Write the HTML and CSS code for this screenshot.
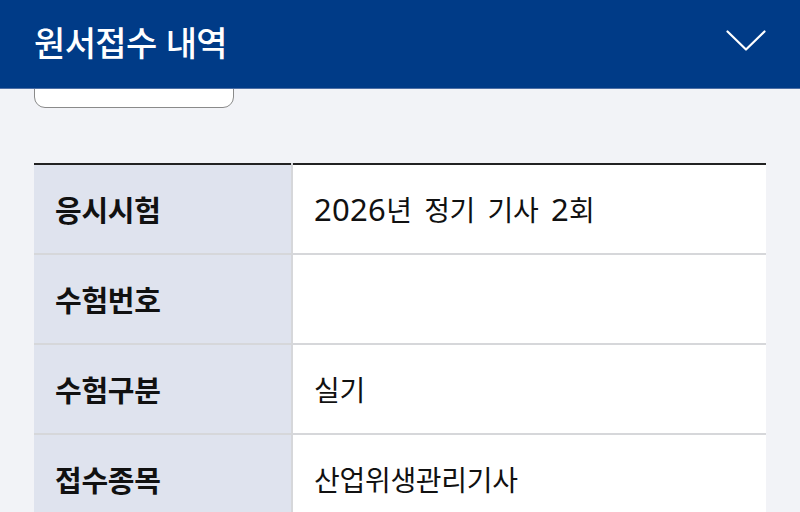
FILE: index.html
```html
<!DOCTYPE html>
<html lang="ko">
<head>
<meta charset="utf-8">
<link rel="stylesheet" href="styles.css">
</head>
<body>
<div class="page">
  <div class="content">
    <div class="btn-wrap"><div class="btn"></div></div>
    <table class="info">
      <tr><th>응시시험</th><td><span class="num">2026</span>년 정기 기사 <span class="num">2</span>회</td></tr>
      <tr><th>수험번호</th><td></td></tr>
      <tr><th>수험구분</th><td>실기</td></tr>
      <tr><th>접수종목</th><td>산업위생관리기사</td></tr>
    </table>
  </div>
  <header class="topbar">
    <h1 class="title">원서접수 내역</h1>
    <svg class="chev" width="40" height="22" viewBox="0 0 40 22"><path d="M1.5 1.5 L20 19.5 L38.5 1.5" fill="none" stroke="#fff" stroke-width="2.2" stroke-linecap="round" stroke-linejoin="round"/></svg>
  </header>
</div>
</body>
</html>
```
FILE: styles.css
```css
html, body { margin: 0; padding: 0; }
body {
  width: 800px; height: 512px; overflow: hidden;
  background: #f2f3f7;
  font-family: "Noto Sans CJK KR", "Noto Sans", sans-serif;
  color: #111;
}
.page { position: relative; width: 800px; height: 512px; }
.topbar {
  position: absolute; left: 0; top: 0; width: 800px; height: 89px;
  background: #003b87;
  border-bottom: 1px solid #4d6fa5;
  box-sizing: border-box;
  display: flex; align-items: center; justify-content: space-between;
  padding: 0 34px 0 34px;
}
.title {
  margin: 0; color: #fff; font-size: 34px; font-weight: 500;
  letter-spacing: -0.6px; line-height: 1;
  padding-bottom: 4px;
}
.chev { display: block; margin-top: -6px; }
.content { padding: 0 34px; }
.btn-wrap { height: 163px; }
.btn {
  width: 200px; height: 108px; box-sizing: border-box;
  background: #fff; border: 1.5px solid #8a8a8a; border-radius: 11px;
}
.info {
  width: 732px; border-collapse: collapse;
  border-top: 2px solid #222;
}
.info th, .info td {
  height: 90px; box-sizing: border-box; padding: 0 0 0 21px;
  font-size: 28px; text-align: left; vertical-align: middle;
  border-bottom: 2px solid #d6d7da;
  letter-spacing: -0.3px;
}
.info th {
  width: 258px; background: #dfe3ee; font-weight: 700; font-size: 29px;
  border-right: 2px solid #d6d7da;
}
.info td { background: #fff; font-weight: 400; word-spacing: 5px; }
.num { font-family: "Noto Sans", sans-serif; font-size: 31px; letter-spacing: 0.3px; }
```
